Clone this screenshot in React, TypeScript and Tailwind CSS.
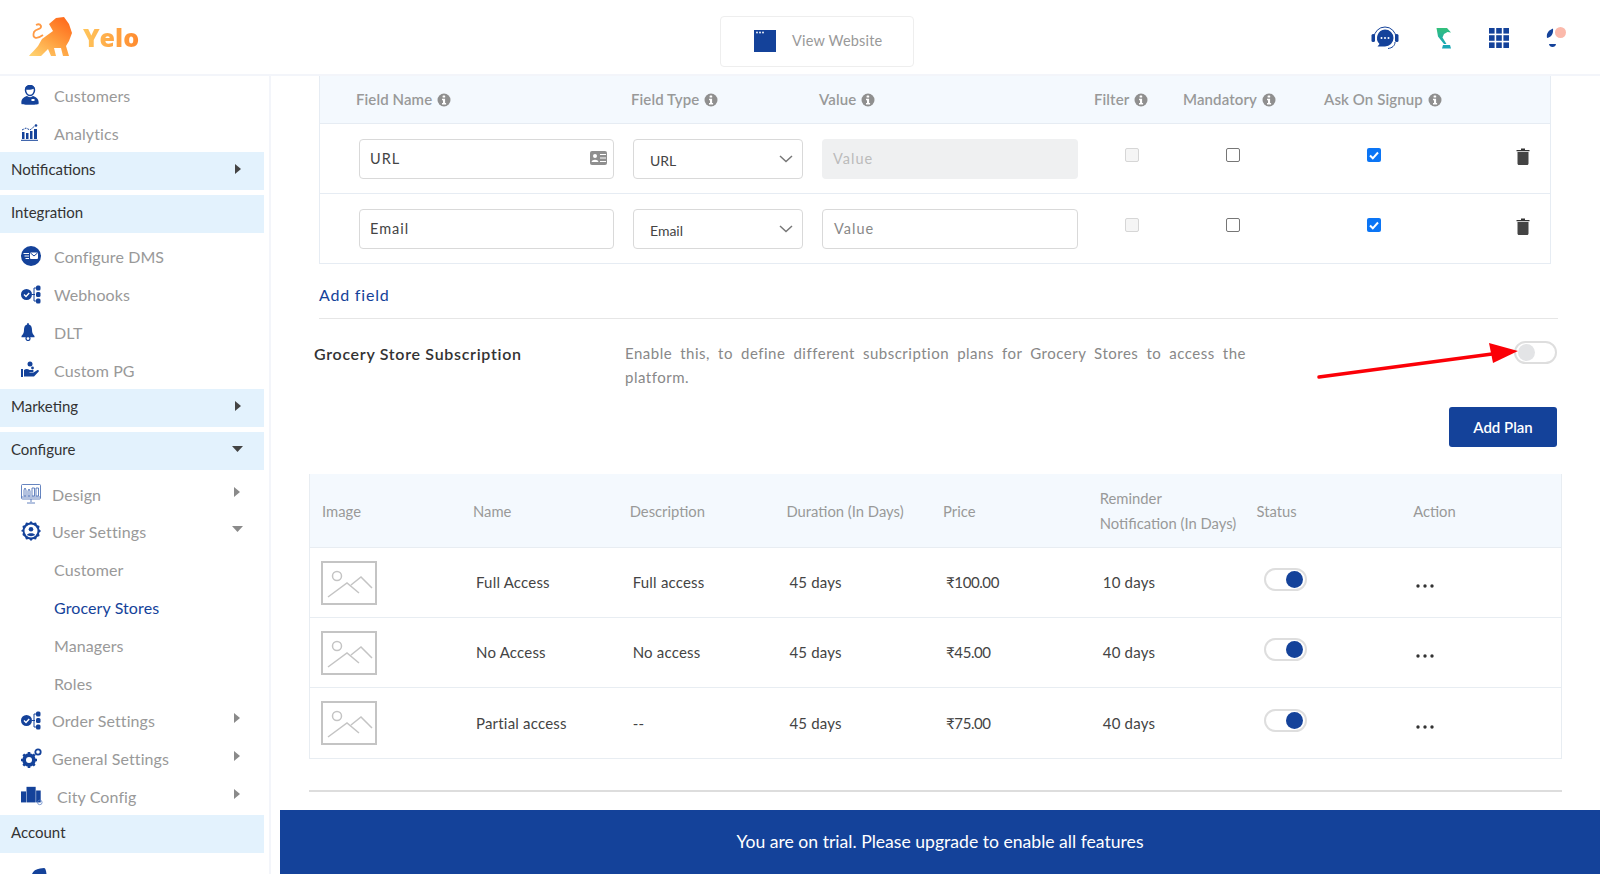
import React from "react";

const BLUE = "#14429a";

function Info() {
  return (
    <svg width="14" height="14" viewBox="0 0 14 14" className="ml-[5px] shrink-0">
      <circle cx="7" cy="7" r="6.5" fill="#8f8f8f" />
      <rect x="5.6" y="2.4" width="2.6" height="2.2" rx="0.6" fill="#fff" />
      <path d="M5 5.7h3.1v4.2h1v1.5H5V9.9h1V7.2H5z" fill="#fff" />
    </svg>
  );
}

function Caret({ down, light }: { down?: boolean; light?: boolean }) {
  const fill = light ? "#8a8a8a" : "#444";
  return down ? (
    <svg width="12" height="7" viewBox="0 0 12 7"><path d="M0 0h11L5.5 6z" fill={fill} /></svg>
  ) : (
    <svg width="7" height="12" viewBox="0 0 7 12"><path d="M0 1v10l6-5z" fill={fill} /></svg>
  );
}

const P = { fill: BLUE };

const icons: Record<string, React.ReactNode> = {
  customers: (
    <svg width="18" height="20" viewBox="0 0 18 20">
      <path d="M4.5 5a4.5 4.5 0 0 1 9 0c0 3-2 5.5-4.5 5.5S4.500 8 4.500 5z" fill="none" stroke={BLUE} strokeWidth="1.5" />
      <path d="M4.500 4.500c2 .5 6 .5 9-1V2.500L11 .5H7L4.500 2z" {...P} />
      <path d="M0.500 19c-1-5 3-7.500 5.500-8 1.500 1.500 4.500 1.500 6 0 2.500.5 6.500 3 5.500 8-1 1-16 1-17 0z" {...P} />
      <rect x="10.500" y="14" width="3" height="2" fill="#fff" />
    </svg>
  ),
  analytics: (
    <svg width="17" height="17" viewBox="0 0 17 17">
      <path d="M1 6l4-2 4 2 6-5" fill="none" stroke={BLUE} strokeWidth="1" strokeDasharray="2 1" />
      <circle cx="15" cy="1.500" r="1.300" {...P} />
      <rect x="1" y="8" width="2.500" height="7" {...P} /><rect x="5" y="9" width="2.500" height="6" {...P} />
      <rect x="9" y="7" width="2.500" height="8" {...P} /><rect x="13" y="5" width="3" height="10" {...P} />
      <rect x="0" y="15.800" width="17" height="1" {...P} />
    </svg>
  ),
  dms: (
    <svg width="20" height="20" viewBox="0 0 20 20">
      <circle cx="10" cy="10" r="10" {...P} />
      <rect x="9" y="6.500" width="8" height="6.500" rx="1" fill="#fff" />
      <path d="M9.500 7l3.500 3 3.500-3" fill="none" stroke={BLUE} strokeWidth="1" />
      <path d="M2.500 7.500h5.500M3.500 10h4.500M4.500 12.500h3.500" stroke="#fff" strokeWidth="1.200" />
    </svg>
  ),
  flow: (
    <svg width="20" height="19" viewBox="0 0 20 19">
      <circle cx="5.500" cy="9.500" r="5.500" {...P} />
      <path d="M3 9.500l2 2 3.200-3.500" fill="none" stroke="#fff" strokeWidth="1.400" />
      <path d="M11 9.500h3M13 3v13h2M13 3h2" fill="none" stroke={BLUE} strokeWidth="1" />
      <rect x="15" y="0.500" width="4.500" height="5" rx="1.500" {...P} />
      <rect x="15" y="7" width="4.500" height="5" rx="1.500" {...P} />
      <rect x="15" y="13.500" width="4.500" height="5" rx="1.500" {...P} />
    </svg>
  ),
  bell: (
    <svg width="14" height="18" viewBox="0 0 14 18">
      <path d="M7 0c.6 0 .9.500.9 1.500 2.500.6 3.100 3 3.100 5.500 0 3 1 4.500 2.500 6v1.300H.500V13C2 11.500 3 10 3 7c0-2.500.6-4.900 3.100-5.500C6.100.500 6.400 0 7 0z" {...P} />
      <circle cx="7" cy="15.500" r="2" fill="none" stroke={BLUE} strokeWidth="1.200" />
    </svg>
  ),
  pg: (
    <svg width="18" height="17" viewBox="0 0 18 17">
      <circle cx="9" cy="3" r="2.500" {...P} />
      <rect x="0" y="8" width="2" height="8" {...P} />
      <path d="M3 9c2-1.500 4-1 5.500 0h3c1.500 0 1.500 2 0 2H8.500v.6l4 0 4-2.500c1.200-.4 1.800.8 1 1.700L13 15.500H3z" {...P} />
      <circle cx="11.500" cy="7" r="1.400" {...P} />
    </svg>
  ),
  design: (
    <svg width="20" height="20" viewBox="0 0 20 20" fill="none" stroke="#3f66b0" strokeWidth="0.800">
      <rect x="0.500" y="0.500" width="19" height="14.500" rx="1" />
      <path d="M3 12V6l1-2 1 2v6zM7 12V7l1-2 1 2v5zM11 12V4h2.500v8zM15 12V4h2.500v8zM0.500 13h19M10 15v3M6 19h8" />
    </svg>
  ),
  user: (
    <svg width="20" height="20" viewBox="0 0 20 20">
      <path d="M10 0l2 2 3-.500 1 2.500 2.500 1-.500 3 2 2-2 2 .500 3-2.500 1-1 2.500-3-.500-2 2-2-2-3 .500-1-2.500L1.500 14l.500-3-2-1 2-2-.500-3L4 4l1-2.500 3 .500z" {...P} />
      <circle cx="10" cy="10" r="6.500" fill="#fff" />
      <circle cx="10" cy="8.300" r="2.300" {...P} />
      <path d="M6 14c.5-2.500 7.500-2.500 8 0-2 1.500-6 1.500-8 0z" {...P} />
    </svg>
  ),
  gears: (
    <svg width="21" height="20" viewBox="0 0 21 20">
      <circle cx="8" cy="12" r="5" fill="none" stroke={BLUE} strokeWidth="3.600" />
      <path d="M8 4v16M0 12h16M2.300 6.300l11.400 11.400M2.300 17.700L13.700 6.300" stroke={BLUE} strokeWidth="2.600" />
      <circle cx="8" cy="12" r="3" fill="#fff" />
      <circle cx="17" cy="4" r="2.700" fill="none" stroke={BLUE} strokeWidth="1.800" />
    </svg>
  ),
  city: (
    <svg width="24" height="20" viewBox="0 0 24 20">
      <rect x="0" y="5" width="5.500" height="12" {...P} />
      <rect x="6" y="0" width="10" height="17" {...P} />
      <rect x="16.500" y="4" width="5" height="13" {...P} />
      <circle cx="20.500" cy="17" r="2.500" fill="none" stroke="#5a7fc4" strokeWidth="0.800" />
    </svg>
  ),
  plan: (
    <svg width="20" height="20" viewBox="0 0 20 20">
      <path d="M0 6C1 3 4 1 8 0.500L12 0c1 0 1.500 1 2 3l.5 3V20H0z" {...P} />
    </svg>
  ),
};

function Band({ label, caret }: { label: string; caret?: "right" | "down" }) {
  return (
    <div className="flex h-[38px] w-[264px] items-center justify-between bg-[#e3f2fd] pb-[3px] pl-[11px] pr-[22px] text-[15px] text-[#333]">
      <span>{label}</span>
      {caret === "right" && <span className="flex"><Caret /></span>}
      {caret === "down" && <span className="-mr-[2px] flex"><Caret down /></span>}
    </div>
  );
}

function Item({ icon, label, caret, textX = 54, iconX = 21 }: { icon: string; label: string; caret?: "right" | "down"; textX?: number; iconX?: number }) {
  return (
    <div className="relative flex h-[37.800px] w-[264px] items-center pr-[22px] text-[16px] tracking-[0.1px] text-[#999]">
      <span className="flex w-[22px] shrink-0 justify-start" style={{ marginLeft: iconX }}>{icons[icon]}</span>
      <span className="translate-y-[1px]" style={{ marginLeft: textX - iconX - 22 }}>{label}</span>
      {caret && (
        <span className="ml-auto flex -translate-y-[2px]">
          {caret === "right" ? <span className="mr-[1px] flex"><Caret light /></span> : <span className="-mr-[2px] flex"><Caret down light /></span>}
        </span>
      )}
    </div>
  );
}

function Sub({ label, active }: { label: string; active?: boolean }) {
  return (
    <div className={`flex h-[37.800px] items-center pl-[54px] pt-[2px] text-[16px] tracking-[0.1px] ${active ? "text-[#14429a]" : "text-[#999]"}`}>
      {label}
    </div>
  );
}

function Sidebar() {
  return (
    <aside className="w-[271px] shrink-0 overflow-hidden border-r-[2px] border-[#f3f5fa]">
      <Item icon="customers" label="Customers" />
      <Item icon="analytics" label="Analytics" />
      <Band label="Notifications" caret="right" />
      <div className="h-[5px]" />
      <Band label="Integration" />
      <div className="h-[5px]" />
      <Item icon="dms" label="Configure DMS" />
      <Item icon="flow" label="Webhooks" />
      <Item icon="bell" label="DLT" />
      <Item icon="pg" label="Custom PG" />
      <Band label="Marketing" caret="right" />
      <div className="h-[5px]" />
      <Band label="Configure" caret="down" />
      <div className="h-[5px]" />
      <Item icon="design" label="Design" caret="right" textX={52} />
      <Item icon="user" label="User Settings" caret="down" textX={52} />
      <Sub label="Customer" />
      <Sub label="Grocery Stores" active />
      <Sub label="Managers" />
      <Sub label="Roles" />
      <Item icon="flow" label="Order Settings" caret="right" textX={52} />
      <Item icon="gears" label="General Settings" caret="right" textX={52} />
      <Item icon="city" label="City Config" caret="right" textX={57} />
      <Band label="Account" />
      <div className="h-[6px]" />
      <Item icon="plan" label="Change Plan" iconX={32} textX={56} />
    </aside>
  );
}

function Logo() {
  return (
    <div className="ml-[28px] flex items-center">
      <svg width="46" height="41" viewBox="0 0 46 41">
        <defs>
          <linearGradient id="lion" x1="0" y1="1" x2="0.7" y2="0">
            <stop offset="0" stopColor="#ffd673" />
            <stop offset="0.55" stopColor="#ff9d3d" />
            <stop offset="1" stopColor="#ff6f1f" />
          </linearGradient>
        </defs>
        <path fill="none" stroke="#ff9a45" strokeWidth="1.800" d="M15 19C8 24 4 22 6 16c2-4 8-2 7-6-1-2-3-2-5-1" />
        <path
          fill="url(#lion)"
          d="M28 2l8-1 5 7 3 9-3 8-3 5 3 10h-6l-2-8h-7l2 8h-5l-3-7-7 7H1c2-3 6-6 9-10l4-7 11-8-4-7z"
        />
      </svg>
      <span className="ml-[9px] translate-y-[1px] bg-gradient-to-r from-[#ffc65c] to-[#ff8a2e] bg-clip-text text-[25px] font-extrabold leading-none text-transparent [font-family:'Open_Sans','Noto_Sans',sans-serif]">
        Yelo
      </span>
    </div>
  );
}

function Header() {
  return (
    <header className="relative flex h-[76px] shrink-0 items-center border-b-[2px] border-[#f3f5fa] bg-white">
      <div className="w-[720px] shrink-0 -translate-y-[1px]"><Logo /></div>
      <div className="flex h-[51px] w-[194px] translate-y-[4px] items-center rounded-[4px] border border-[#eeeeee] pl-[33px] text-[14.500px] tracking-[0.2px] text-[#999]">
        <svg width="22" height="22" viewBox="0 0 22 22" className="shrink-0">
          <rect width="22" height="22" fill={BLUE} />
          <circle cx="3" cy="2.500" r="0.900" fill="#fff" /><circle cx="6" cy="2.500" r="0.900" fill="#fff" /><circle cx="9" cy="2.500" r="0.900" fill="#fff" />
        </svg>
        <span className="ml-[16px]">View Website</span>
      </div>
      <div className="ml-auto mr-[34px] flex translate-y-[1px] items-center gap-[37px]">
        <svg width="28" height="24" viewBox="0 0 28 24">
          <path d="M3 12a11 11 0 0 1 22 0" fill="none" stroke={BLUE} strokeWidth="1" />
          <rect x="0.500" y="8" width="3.500" height="8" rx="1.500" fill={BLUE} />
          <rect x="24" y="8" width="3.500" height="8" rx="1.500" fill={BLUE} />
          <path d="M14 3.500a8.500 8.500 0 0 1 0 17H6.500l2-2.500A8.500 8.500 0 0 1 14 3.500z" fill={BLUE} />
          <circle cx="10.500" cy="12" r="1" fill="#fff" /><circle cx="14" cy="12" r="1" fill="#fff" /><circle cx="17.500" cy="12" r="1" fill="#fff" />
          <path d="M24 16c0 4-3 6-7 6.500" fill="none" stroke={BLUE} strokeWidth="1" />
        </svg>
        <svg width="16" height="21" viewBox="0 0 16 21">
          <defs>
            <linearGradient id="leaf" x1="0" y1="0" x2="0" y2="1">
              <stop offset="0" stopColor="#34c07a" /><stop offset="1" stopColor="#19a8b5" />
            </linearGradient>
          </defs>
          <path d="M0.500 0H11l4 4.500-3.500-.5L8 6l-1.500 3.500 4 6.500H8L2 8.500z" fill="url(#leaf)" />
          <path d="M7 17h7l1 3.500H6z" fill="#19a8b5" />
        </svg>
        <svg width="20" height="20" viewBox="0 0 20 20" fill={BLUE}>
          <rect x="0" y="0" width="5.600" height="5.600" /><rect x="7.200" y="0" width="5.600" height="5.600" /><rect x="14.400" y="0" width="5.600" height="5.600" />
          <rect x="0" y="7.200" width="5.600" height="5.600" /><rect x="7.200" y="7.200" width="5.600" height="5.600" /><rect x="14.400" y="7.200" width="5.600" height="5.600" />
          <rect x="0" y="14.400" width="5.600" height="5.600" /><rect x="7.200" y="14.400" width="5.600" height="5.600" /><rect x="14.400" y="14.400" width="5.600" height="5.600" />
        </svg>
        <svg width="20" height="22" viewBox="0 0 20 22">
          <path d="M1 11C0 6 3 3 7 1.500 7.500 6 6 10 1 11z" fill={BLUE} />
          <circle cx="14.500" cy="5.500" r="5.500" fill="#fbb9ab" />
          <path d="M3 17h7c-.500 2.200-1.500 3-3.500 3S3.500 19.200 3 17z" fill={BLUE} />
        </svg>
      </div>
    </header>
  );
}

const fieldCols = "grid-cols-[39px_274px_190px_263px_92px_140px_190px_1fr]";

function FieldRow({ name, type, url }: { name: string; type: string; url?: boolean }) {
  return (
    <div className={`grid h-[70px] ${fieldCols} items-start border-b border-[#e6ecf3] pt-[15px]`}>
      <div />
      <div className="relative flex h-[40px] w-[255px] items-center rounded-[4px] border border-[#d9d9d9] pl-[10px] text-[14.500px] tracking-[1px] text-[#444]">
        {name}
        {url && (
          <svg width="18" height="14" viewBox="0 0 18 14" className="absolute right-[5px] top-[11px]">
            <rect width="17" height="14" rx="2" fill="#8f8f8f" />
            <circle cx="5" cy="5" r="2" fill="#fff" />
            <path d="M1.500 11c.5-3 6.500-3 7 0z" fill="#fff" />
            <path d="M10 3.500h6M10 7h6M10 10.500h6" stroke="#fff" strokeWidth="1.200" />
          </svg>
        )}
      </div>
      <div className="relative flex h-[40px] w-[170px] items-center rounded-[4px] border border-[#d9d9d9] pl-[16px] pt-[2px] text-[14px] text-[#444]">
        {type}
        <svg width="14" height="8" viewBox="0 0 14 8" className="absolute right-[9px] top-[15px]">
          <path d="M1 1l6 5.500L13 1" fill="none" stroke="#777" strokeWidth="1.500" />
        </svg>
      </div>
      <div
        className={`-ml-[1px] flex h-[40px] w-[256px] items-center rounded-[4px] pl-[11px] text-[14.500px] tracking-[1px] ${url ? "bg-[#eff0f1] text-[#bbb]" : "border border-[#d9d9d9] text-[#888]"}`}
      >
        Value
      </div>
      <div className="flex pl-[39px] pt-[9px]"><span className="h-[14px] w-[14px] rounded-[2px] border border-[#d6d6d6] bg-[#f5f5f5]" /></div>
      <div className="flex pl-[48px] pt-[9px]"><span className="h-[14px] w-[14px] rounded-[2px] border border-[#767676] bg-white" /></div>
      <div className="flex pl-[49px] pt-[9px]">
        <span className="flex h-[14px] w-[14px] items-center justify-center rounded-[2px] bg-[#0b75f5]">
          <svg width="10" height="9" viewBox="0 0 10 9"><path d="M1 4.500l2.800 2.800L9 1.500" fill="none" stroke="#fff" strokeWidth="2" /></svg>
        </span>
      </div>
      <div className="flex pl-[8px] pt-[9px]">
        <svg width="14" height="17" viewBox="0 0 14 17">
          <path d="M0.500 2h13v1.200H.500zM5 .500h4V2H5z" fill="#333" />
          <path d="M1.500 4h11v11.500c0 .8-.6 1.500-1.400 1.500H2.900c-.8 0-1.400-.7-1.400-1.500z" fill="#444" />
        </svg>
      </div>
    </div>
  );
}

function FieldsTable() {
  return (
    <div className="ml-[48px] w-[1232px] border-x border-[#e6ecf3]">
      <div className={`grid h-[48px] ${fieldCols} items-center border-b border-[#e6ecf3] bg-[#f4f9fe] text-[15px] font-semibold tracking-[0.1px] text-[#999]`}>
        <div />
        <div className="flex -translate-x-[3px] items-center">Field Name<Info /></div>
        <div className="flex -translate-x-[2px] items-center">Field Type<Info /></div>
        <div className="flex -translate-x-[4px] items-center">Value<Info /></div>
        <div className="flex translate-x-[8px] items-center">Filter<Info /></div>
        <div className="flex translate-x-[5px] items-center">Mandatory<Info /></div>
        <div className="flex translate-x-[6px] items-center">Ask On Signup<Info /></div>
        <div />
      </div>
      <FieldRow name="URL" type="URL" url />
      <FieldRow name="Email" type="Email" />
    </div>
  );
}

function Toggle({ on }: { on?: boolean }) {
  return (
    <span className="relative block h-[23px] w-[43px] rounded-full border-[2px] border-[#dedede] bg-white">
      <span className={`absolute top-[1px] h-[17px] w-[17px] rounded-full ${on ? "right-[2px] bg-[#14429a]" : "left-[2px] bg-[#e3e4e6]"}`} />
    </span>
  );
}

function PlaceholderImg() {
  return (
    <svg width="56" height="44" viewBox="0 0 56 44" fill="none" stroke="#c4c4c4">
      <rect x="1" y="1" width="54" height="42" strokeWidth="2" />
      <circle cx="16" cy="15" r="4.500" strokeWidth="1.500" />
      <path d="M7 36l19-14 12 10M30 24l10-8 11 11" strokeWidth="1.500" />
    </svg>
  );
}

const plans = [
  ["Full Access", "Full access", "45 days", "₹100.00", "10 days"],
  ["No Access", "No access", "45 days", "₹45.00", "40 days"],
  ["Partial access", "--", "45 days", "₹75.00", "40 days"],
];

const planCols = "grid-cols-[151px_repeat(7,156.700px)]";

function PlanTable() {
  return (
    <div className="ml-[38px] w-[1253px] border-x border-b border-[#e8edf2]">
      <div className={`grid h-[74px] ${planCols} items-center border-b border-[#e8edf2] bg-[#f4f9fe] pl-[12px] pt-[1px] text-[14.800px] text-[#999]`}>
        <div>Image</div>
        <div>Name</div>
        <div>Description</div>
        <div>Duration (In Days)</div>
        <div>Price</div>
        <div className="whitespace-nowrap leading-[25px]">Reminder<br />Notification (In Days)</div>
        <div>Status</div>
        <div>Action</div>
      </div>
      {plans.map((p, i) => (
        <div key={p[0]} className={`grid h-[70px] ${planCols} items-center pl-[15px] text-[15px] tracking-[0.2px] text-[#444] ${i < 2 ? "border-b border-[#e8edf2]" : ""}`}>
          <div className="-ml-[4px]"><PlaceholderImg /></div>
          <div>{p[0]}</div>
          <div>{p[1]}</div>
          <div>{p[2]}</div>
          <div className="tracking-[-0.4px]">{p[3]}</div>
          <div>{p[4]}</div>
          <div className="ml-[5px] -translate-y-[3px]"><Toggle on /></div>
          <div className="pt-[7px]">
            <svg width="18" height="4" viewBox="0 0 18 4" fill="#333">
              <circle cx="2" cy="2" r="1.700" /><circle cx="9" cy="2" r="1.700" /><circle cx="16" cy="2" r="1.700" />
            </svg>
          </div>
        </div>
      ))}
    </div>
  );
}

export default function App() {
  return (
    <div className="flex h-[874px] w-[1600px] flex-col overflow-hidden bg-white [font-family:'Lato','Liberation_Sans',sans-serif]">
      <Header />
      <div className="flex min-h-0 flex-1">
        <Sidebar />
        <main className="flex min-w-0 flex-1 flex-col">
          <div className="min-h-0 flex-1 overflow-hidden">
            <FieldsTable />
            <div className="ml-[48px] mt-[19px] text-[16px] tracking-[0.8px] text-[#14429a]">Add field</div>
            <div className="ml-[48px] mt-[11px] w-[1239px] border-t border-[#e6e6e6]" />
            <div className="relative ml-[43px] mt-[16px] flex w-[1243px] items-start justify-between">
              <div className="w-[311px] pt-[7px] text-[16px] font-semibold tracking-[0.7px] text-[#333]">Grocery Store Subscription</div>
              <p className="w-[621px] pt-[6px] text-justify text-[15px] leading-[24px] tracking-[0.5px] text-[#888]">
                Enable this, to define different subscription plans for Grocery Stores to access the platform.
              </p>
              <div className="flex w-[311px] justify-end pt-[6px]">
                <Toggle />
              </div>
              <svg width="210" height="40" viewBox="0 0 210 40" className="absolute left-[1003px] top-[5px]">
                <path d="M2 37 L175 14" stroke="#fb0007" strokeWidth="3.500" strokeLinecap="round" fill="none" />
                <path d="M172 3 L201 11 L176 23 Z" fill="#fb0007" />
              </svg>
            </div>
            <div className="ml-[1178px] mt-[18px] flex h-[40px] w-[108px] items-center justify-center rounded-[3px] bg-[#14429a] text-[15px] font-semibold text-white">
              Add Plan
            </div>
            <div className="h-[27px]" />
            <PlanTable />
            <div className="ml-[38px] mt-[31px] h-[2px] w-[1253px] bg-[#dddddd]" />
          </div>
          <div className="ml-[9px] flex h-[64px] shrink-0 items-center justify-center bg-[#14429a] text-[17.600px] text-white">
            You are on trial. Please upgrade to enable all features
          </div>
        </main>
      </div>
    </div>
  );
}
